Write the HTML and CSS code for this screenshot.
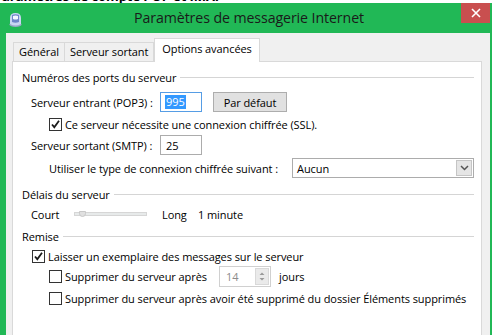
FILE: index.html
```html
<!DOCTYPE html>
<html lang="fr">
<head>
<meta charset="utf-8">
<title>Paramètres de messagerie Internet</title>
<link rel="stylesheet" href="styles.css">
</head>
<body>
<div class="behind"><span class="behind-text">Paramètres de compte POP et IMAP</span></div>
<div class="window">
  <div class="titlebar">
    <div class="appicon">
      <svg width="15" height="16" viewBox="0 0 15 16">
        <ellipse cx="7.5" cy="12.5" rx="6" ry="2.5" fill="#9aa6c8"/>
        <path d="M2 6 Q2 1 7.5 1 Q13 1 13 6 L13 12 Q7.5 15 2 12 Z" fill="#c9d6f2"/>
        <path d="M4 3 Q7.5 1.5 11 3 L11 10 Q7.5 11.5 4 10 Z" fill="#6f86c9"/>
        <path d="M5 4 Q7.5 3 10 4 L10 7 Q7.5 8 5 7 Z" fill="#f4f7ff"/>
      </svg>
    </div>
    <div class="title">Paramètres de messagerie Internet</div>
    <div class="closewrap"><div class="close">
      <svg width="10" height="10" viewBox="0 0 10 10"><path d="M1 1 L9 9 M9 1 L1 9" stroke="#fff" stroke-width="1.6"/></svg>
    </div></div>
  </div>
  <div class="client">
    <div class="tabs">
      <div class="tab">Général</div>
      <div class="tab">Serveur sortant</div>
      <div class="tab active">Options avancées</div>
    </div>
    <div class="panel">
      <div class="group r-group1"><span>Numéros des ports du serveur</span><span class="rule"></span></div>

      <div class="row in1 r-pop">
        <span class="lbl">Serveur entrant (POP3) :</span>
        <span class="field focus"><span class="sel">995</span></span>
        <span class="btn">Par défaut</span>
      </div>

      <div class="row in2 r-ssl">
        <span class="cb checked"><svg width="11" height="11" viewBox="0 0 11 11"><path d="M2 5.5 L4.3 8.2 L9 1.8" stroke="#1a1a1a" stroke-width="1.8" fill="none"/></svg></span>
        <span>Ce serveur nécessite une connexion chiffrée (SSL).</span>
      </div>

      <div class="row in1 r-smtp">
        <span class="lbl">Serveur sortant (SMTP) :</span>
        <span class="field">25</span>
      </div>

      <div class="row in2 r-enc">
        <span class="enclbl">Utiliser le type de connexion chiffrée suivant :</span>
        <span class="select"><span class="selval">Aucun</span><span class="drop"><svg width="9" height="6" viewBox="0 0 9 6"><path d="M1 1 L4.5 4.5 L8 1" stroke="#555" stroke-width="1.5" fill="none"/></svg></span></span>
      </div>

      <div class="group r-group2"><span>Délais du serveur</span><span class="rule"></span></div>

      <div class="row in1 r-slider">
        <span class="court">Court</span>
        <span class="track"><span class="thumb"></span></span>
        <span class="long">Long</span>
        <span>1 minute</span>
      </div>

      <div class="group r-group3"><span>Remise</span><span class="rule"></span></div>

      <div class="row in1b r-keep">
        <span class="cb checked"><svg width="11" height="11" viewBox="0 0 11 11"><path d="M2 5.5 L4.3 8.2 L9 1.8" stroke="#1a1a1a" stroke-width="1.8" fill="none"/></svg></span>
        <span>Laisser un exemplaire des messages sur le serveur</span>
      </div>

      <div class="row in2 r-del">
        <span class="cb"></span>
        <span class="dellbl">Supprimer du serveur après</span>
        <span class="spin"><span class="spinval">14</span><span class="spinbtn"><svg width="8" height="13" viewBox="0 0 8 13"><path d="M1.5 5 L4 2.5 L6.5 5 Z M1.5 8 L4 10.5 L6.5 8 Z" fill="#999"/></svg></span></span>
        <span class="jours">jours</span>
      </div>

      <div class="row in2 r-del2">
        <span class="cb"></span>
        <span>Supprimer du serveur après avoir été supprimé du dossier Éléments supprimés</span>
      </div>
    </div>
  </div>
</div>
</body>
</html>
```

FILE: styles.css
```css
* { box-sizing: border-box; }
html, body { margin: 0; padding: 0; background: #ffffff; }
body {
  width: 492px;
  height: 335px;
  overflow: hidden;
  font-family: "Open Sans", "Noto Sans", sans-serif;
  font-size: 11px;
  letter-spacing: -0.08px;
  color: #000;
}
.behind {
  height: 3px;
  overflow: hidden;
  background: #fff;
}
.behind-text {
  display: block;
  margin-top: -11px;
  margin-left: -6px;
  font-weight: bold;
  font-size: 13px;
  line-height: 14px;
  white-space: nowrap;
}
.window {
  background: #21b856;
  padding: 0 2px 0 6px;
  height: 332px;
  display: flex;
  flex-direction: column;
}
.titlebar {
  height: 30px;
  display: grid;
  grid-template-columns: 1fr auto 1fr;
  margin-left: -6px;
  margin-right: -2px;
}
.appicon {
  justify-self: start;
  padding-left: 8px;
  padding-top: 9px;
}
.title {
  font-size: 14.2px;
  letter-spacing: -0.1px;
  color: #1a1a1a;
  line-height: 30px;
  padding-left: 6px;
}
.closewrap {
  justify-self: end;
  padding-right: 2px;
}
.close {
  width: 29px;
  height: 20px;
  background: #c94f4f;
  display: flex;
  align-items: center;
  justify-content: center;
}
.client {
  flex: 1;
  background: #f0f0f0;
  padding: 5px 8px 0 6px;
  display: flex;
  flex-direction: column;
}
.tabs {
  display: flex;
  align-items: flex-end;
  height: 23px;
  padding-left: 1px;
}
.tab {
  height: 19px;
  padding: 0 5px;
  border: 1px solid #d9d9d9;
  border-bottom: none;
  background: #f0f0f0;
  line-height: 18px;
  color: #000;
  white-space: nowrap;
}
.tab + .tab { border-left: none; }
.tab.active {
  height: 24px;
  background: #fff;
  margin-bottom: -1px;
  padding: 0 7px;
  line-height: 20px;
  position: relative;
  border-left: 1px solid #d9d9d9;
}
.panel {
  flex: 1;
  background: #fff;
  border: 1px solid #d9d9d9;
  border-bottom: none;
  padding: 7px 7px 0 9px;
  display: flex;
  flex-direction: column;
}
.group {
  display: flex;
  align-items: center;
  height: 16px;
  white-space: nowrap;
}
.rule {
  flex: 1;
  height: 1px;
  background: #d5d5d5;
  margin-left: 4px;
}
.row {
  display: flex;
  align-items: center;
  white-space: nowrap;
}
.in1 { padding-left: 9px; }
.in1b { padding-left: 10px; }
.in2 { padding-left: 27px; }

.r-pop { height: 20px; margin-top: 7px; }
.r-ssl { height: 14px; margin-top: 5px; }
.r-smtp { height: 20px; margin-top: 4px; }
.r-enc { height: 20px; margin-top: 3px; }
.r-group2 { margin-top: 8px; }
.r-slider { height: 16px; margin-top: 4px; }
.r-group3 { margin-top: 6px; }
.r-keep { height: 16px; margin-top: 4px; }
.r-del { height: 21px; margin-top: 2px; }
.r-del2 { height: 16px; margin-top: 3px; }

.lbl { width: 129px; }
.field {
  width: 42px;
  height: 20px;
  border: 1px solid #acacac;
  background: #fff;
  padding-left: 5px;
  display: flex;
  align-items: center;
}
.field.focus { border-color: #569de5; padding-left: 4px; }
.sel {
  background: #3399ff;
  color: #fff;
  padding: 0 1px;
  line-height: 14px;
}
.btn {
  margin-left: 11px;
  width: 74px;
  height: 20px;
  border: 1px solid #adadad;
  background: #e1e1e1;
  display: flex;
  align-items: center;
  justify-content: center;
}
.cb {
  width: 13px;
  height: 13px;
  border: 1px solid #333;
  background: #fff;
  margin-right: 3px;
  display: flex;
  align-items: center;
  justify-content: center;
  flex: none;
}
.enclbl { width: 243px; }
.select {
  width: 182px;
  height: 20px;
  border: 1px solid #acacac;
  background: #fff;
  display: flex;
  align-items: center;
  justify-content: space-between;
  padding: 0 1px 0 4px;
}
.drop {
  width: 16px;
  height: 16px;
  background: #e5e5e5;
  border: 1px solid #c5c5c5;
  display: flex;
  align-items: center;
  justify-content: center;
}
.court { width: 43px; }
.track {
  width: 73px;
  height: 4px;
  background: #e7eaea;
  border: 1px solid #d6d6d6;
  position: relative;
  margin-right: 15px;
}
.thumb {
  position: absolute;
  left: 4px;
  top: -2px;
  width: 7px;
  height: 6px;
  background: #e0e0e0;
  border: 1px solid #c8c8c8;
  border-radius: 0 0 4px 4px;
}
.long { width: 36px; }
.dellbl { width: 154px; }
.spin {
  width: 52px;
  height: 21px;
  border: 1px solid #d0d0d0;
  background: #fff;
  display: flex;
  align-items: center;
  justify-content: space-between;
  padding: 0 1px 0 6px;
}
.spinval { color: #8c8c8c; }
.spinbtn {
  width: 14px;
  height: 17px;
  background: #eaeaea;
  border: 1px solid #d9d9d9;
  display: flex;
  align-items: center;
  justify-content: center;
}
.jours { margin-left: 8px; }
```
